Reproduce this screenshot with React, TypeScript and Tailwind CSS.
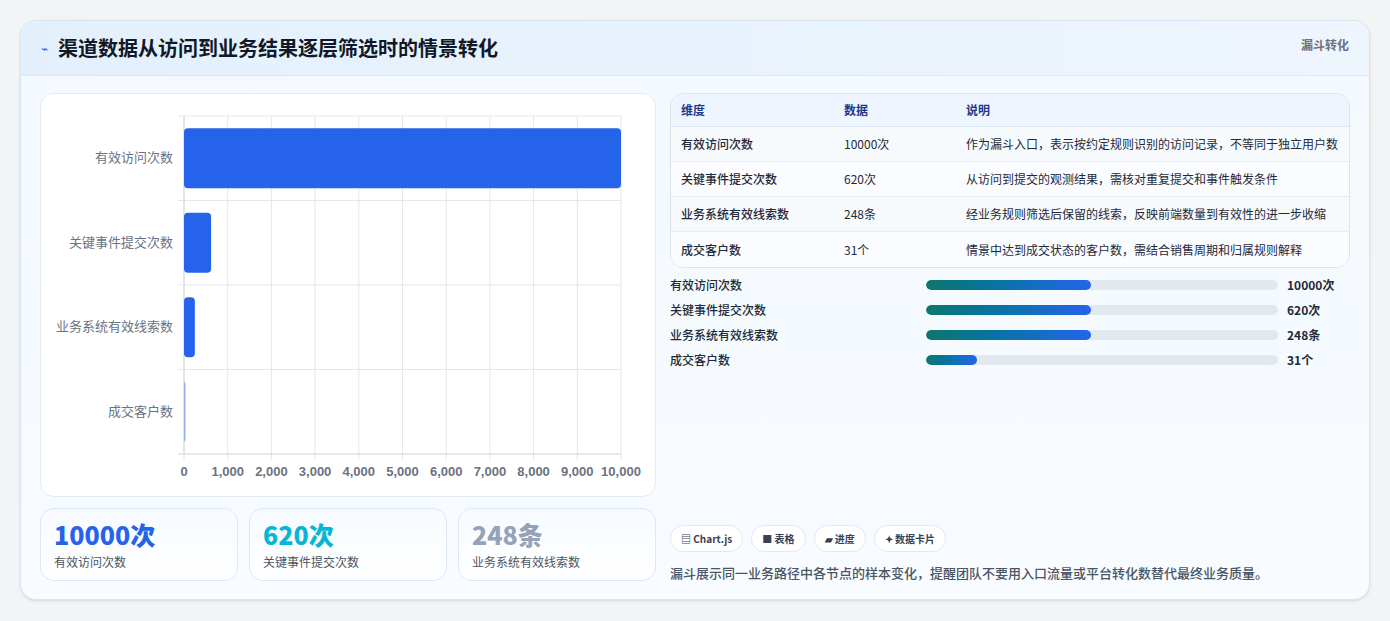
import React from "react";

const rows = [
  { n: "有效访问次数", v: 10000, t: "10000次", d: "作为漏斗入口，表示按约定规则识别的访问记录，不等同于独立用户数", p: 47 },
  { n: "关键事件提交次数", v: 620, t: "620次", d: "从访问到提交的观测结果，需核对重复提交和事件触发条件", p: 47 },
  { n: "业务系统有效线索数", v: 248, t: "248条", d: "经业务规则筛选后保留的线索，反映前端数量到有效性的进一步收缩", p: 47 },
  { n: "成交客户数", v: 31, t: "31个", d: "情景中达到成交状态的客户数，需结合销售周期和归属规则解释", p: 14.5 },
];

function Chart() {
  const L = 143, R = 580, T = 22, B = 360;
  const W = R - L;
  const band = (B - T) / 4;
  return (
    <svg width="615" height="403" className="block">
      {Array.from({ length: 11 }).map((_, i) => (
        <line key={i} x1={L + (W * i) / 10} x2={L + (W * i) / 10} y1={T} y2={B + 6} stroke="#e5e7eb" />
      ))}
      {[1, 2, 3].map((i) => (
        <line key={i} x1={L - 6} x2={R} y1={T + band * i} y2={T + band * i} stroke="#e5e7eb" />
      ))}
      <line x1={L - 6} x2={R} y1={T} y2={T} stroke="#e5e7eb" />
      <line x1={L} x2={L} y1={T} y2={B} stroke="#d1d5db" />
      <line x1={L - 6} x2={R} y1={B} y2={B} stroke="#cbd5e1" />
      {rows.map((r, i) => {
        const w = Math.max((W * r.v) / 10000, 1.5);
        const y = T + band * i + (band - 60) / 2;
        return (
          <g key={i}>
            <rect x={L} y={y} width={w} height={60} rx={4} fill={i === 3 ? "#93b4e8" : "#2563eb"} />
            <text x={L - 11} y={y + 34} textAnchor="end" fontSize="13" fill="#6b7280" fontFamily="'Noto Sans CJK SC', sans-serif">{r.n}</text>
          </g>
        );
      })}
      {Array.from({ length: 11 }).map((_, i) => (
        <text key={i} x={L + (W * i) / 10} y={B + 22} textAnchor="middle" fontSize="13" fontWeight="600" fill="#6b7280" fontFamily="'Liberation Sans', sans-serif">
          {(i * 1000).toLocaleString("en-US")}
        </text>
      ))}
    </svg>
  );
}

export default function App() {
  return (
    <div className="w-[1390px] h-[621px] bg-[#f3f4f6] pt-[20px] px-[20px]" style={{ fontFamily: "'Noto Sans CJK SC', 'Noto Sans', sans-serif" }}>
      <div className="w-[1350px] h-[580px] rounded-[16px] border border-[#d6e6f5] bg-gradient-to-b from-[#f3f9fe] to-[#f8fbff] overflow-hidden shadow-sm">
        <div className="h-[55px] bg-gradient-to-r from-[#e3f0fc] to-[#eef5fd] border-b border-[#dbe9f6] flex justify-between pl-[20px] pr-[20px]">
          <div className="flex items-center gap-[10px]">
            <span className="text-[#2563eb] text-[12px]">⌁</span>
            <span className="text-[20px] font-bold text-[#111827]">渠道数据从访问到业务结果逐层筛选时的情景转化</span>
          </div>
          <div className="pt-[15px] text-[12px] font-bold text-[#6b7280]">漏斗转化</div>
        </div>
        <div className="flex gap-[14px] px-[19px] pt-[17px]">
          <div className="w-[616px] flex flex-col gap-[11px]">
            <div className="h-[404px] bg-white rounded-[14px] border border-[#e1ebf5]">
              <Chart />
            </div>
            <div className="grid grid-cols-3 gap-[11px]">
              {[
                ["10000次", "text-[#2563eb]", "有效访问次数"],
                ["620次", "text-[#06b6d4]", "关键事件提交次数"],
                ["248条", "text-[#94a3b8]", "业务系统有效线索数"],
              ].map(([v, c, l]) => (
                <div key={l} className="h-[73px] rounded-[14px] border border-[#dce8f4] bg-gradient-to-b from-[#f7fbff] to-white px-[13px] pt-[10px]">
                  <div className={`text-[25px] leading-[30px] font-extrabold ${c}`}>{v}</div>
                  <div className="text-[12px] text-[#4b5563] mt-[4px]">{l}</div>
                </div>
              ))}
            </div>
          </div>
          <div className="w-[681px] flex flex-col">
            <div className="rounded-[14px] border border-[#d8e4f0] overflow-hidden bg-white">
              <div className="h-[33px] bg-[#eef5fe] border-b border-[#dbe6f1] flex items-center text-[12px] font-bold text-[#1e3a8a]">
                <div className="w-[173px] pl-[10px]">维度</div>
                <div className="w-[122px]">数据</div>
                <div>说明</div>
              </div>
              {rows.map((r, i) => (
                <div key={i} className={`h-[35px] flex items-center text-[12px] text-[#1f2937] ${i < 3 ? "border-b border-[#e5edf5]" : ""} ${i % 2 ? "bg-[#fafcff]" : "bg-[#f7fafd]"}`}>
                  <div className="w-[173px] pl-[10px] font-medium">{r.n}</div>
                  <div className="w-[122px]">{r.t}</div>
                  <div className="whitespace-nowrap">{r.d}</div>
                </div>
              ))}
            </div>
            <div className="mt-[8px] flex flex-col gap-[7px]">
              {rows.map((r, i) => (
                <div key={i} className="h-[18px] flex items-center text-[12px] font-medium text-[#1f2937]">
                  <div className="w-[256px]">{r.n}</div>
                  <div className="w-[352px] h-[10px] rounded-full bg-[#e2e8f0] overflow-hidden">
                    <div className="h-full rounded-full bg-gradient-to-r from-[#0f766e] to-[#2563eb]" style={{ width: `${r.p}%` }} />
                  </div>
                  <div className="pl-[9px] font-bold">{r.t}</div>
                </div>
              ))}
            </div>
            <div className="mt-[156px] flex gap-[8px]">
              {["▤ Chart.js", "■ 表格", "▰ 进度", "✦ 数据卡片"].map((c) => (
                <div key={c} className="h-[27px] px-[10px] rounded-full border border-[#e2e8f0] bg-white flex items-center text-[10px] font-bold text-[#374151]">{c}</div>
              ))}
            </div>
            <div className="mt-[11px] text-[13px] font-medium text-[#4b5563]">漏斗展示同一业务路径中各节点的样本变化，提醒团队不要用入口流量或平台转化数替代最终业务质量。</div>
          </div>
        </div>
      </div>
    </div>
  );
}
